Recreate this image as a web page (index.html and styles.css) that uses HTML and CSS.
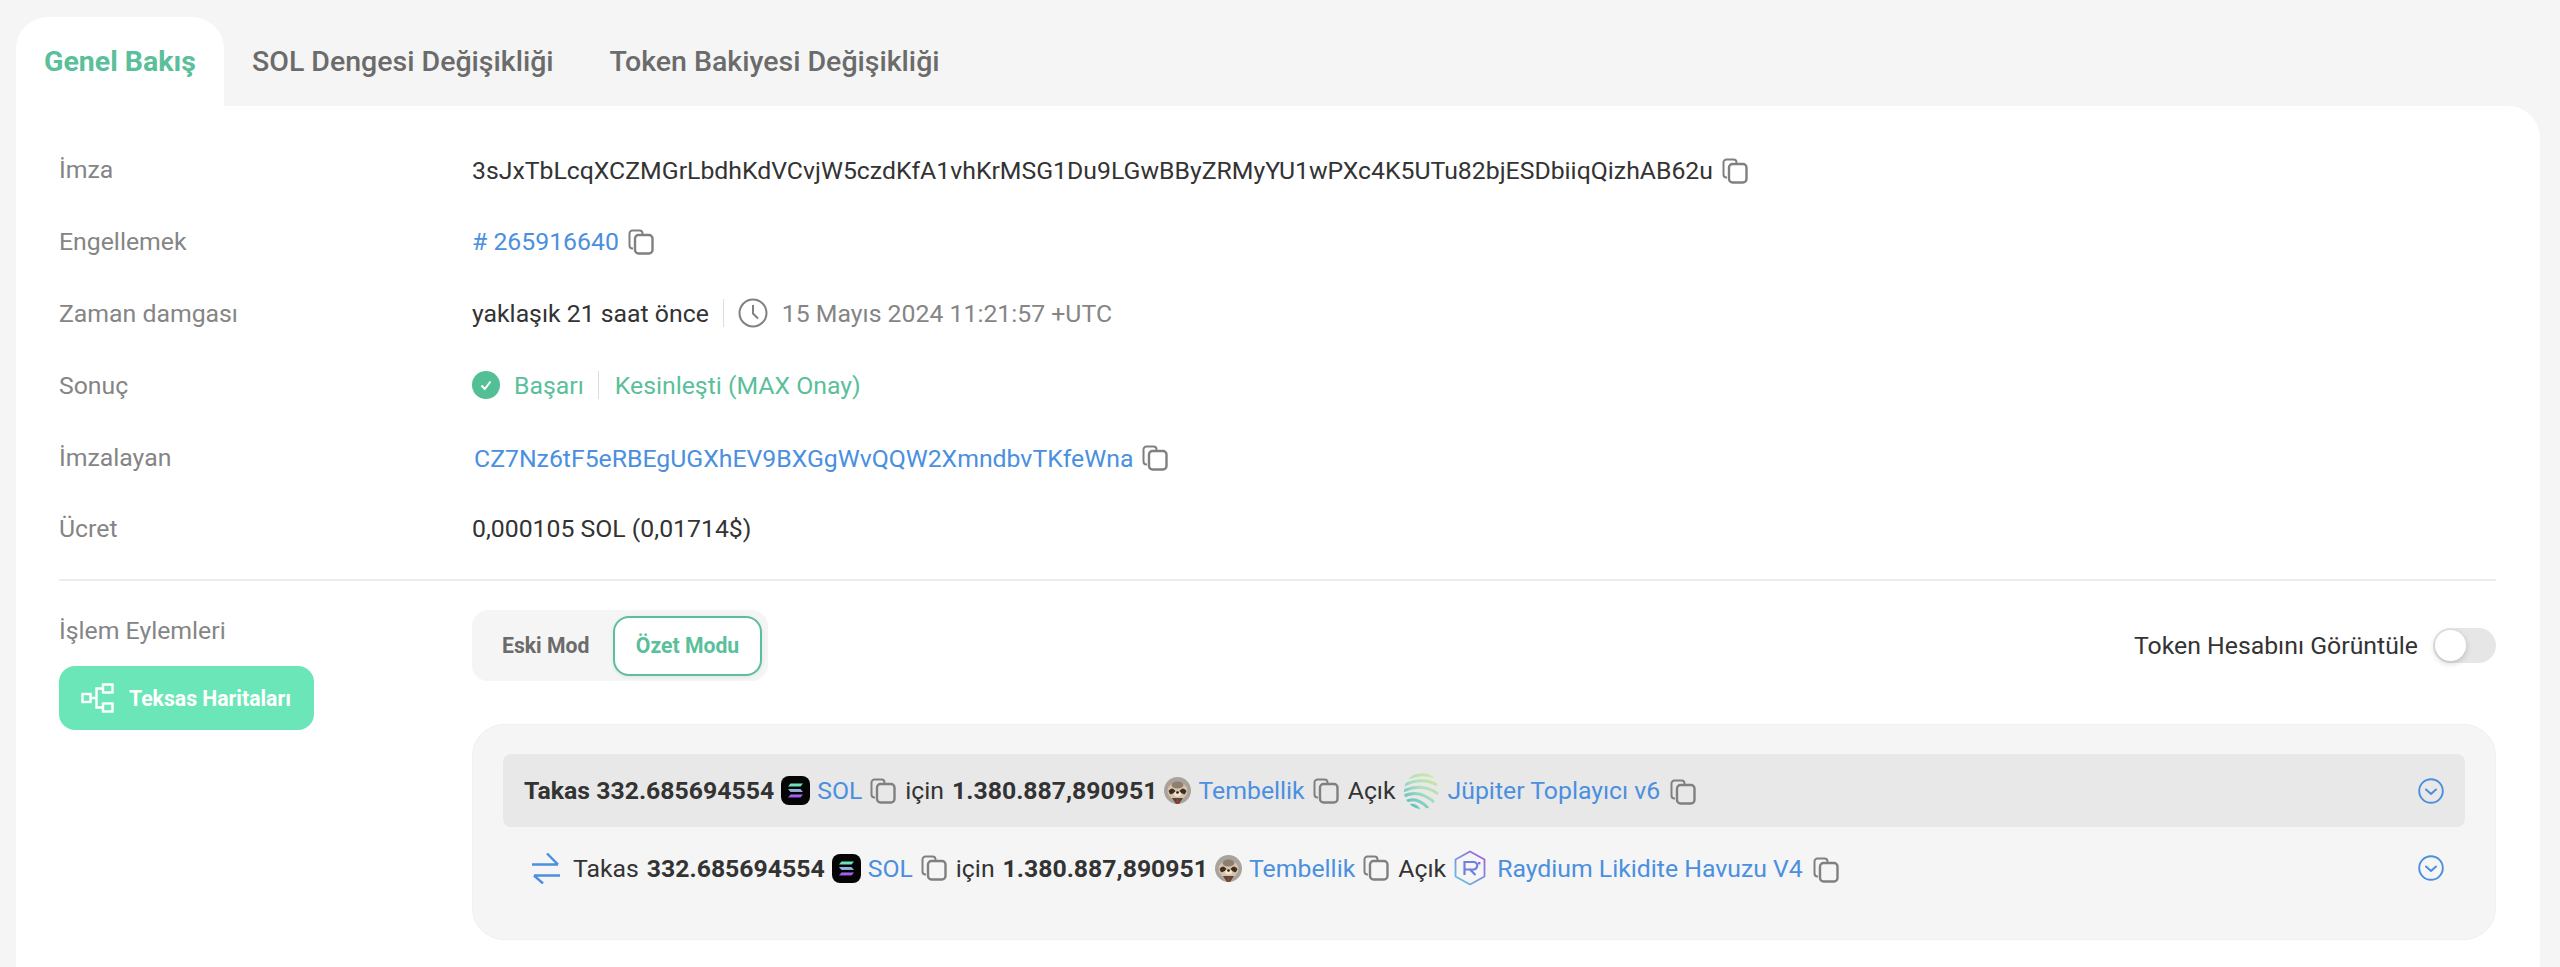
FILE: index.html
```html
<!DOCTYPE html>
<html lang="tr">
<head>
<meta charset="utf-8">
<title>Genel Bakış</title>
<link rel="stylesheet" href="styles.css">
</head>
<body>
<svg class="defs" width="0" height="0" aria-hidden="true">
  <defs>
    <symbol id="copy" viewBox="0 0 26 26">
      <path d="M5 19.5H4.5A3 3 0 0 1 1.5 16.500V4.500A3 3 0 0 1 4.500 1.500H11.500A3 3 0 0 1 14.500 4.500V5" fill="none" stroke="currentColor" stroke-width="2"/>
      <rect x="7" y="6" width="17.500" height="18.500" rx="3.500" fill="none" stroke="currentColor" stroke-width="2.400"/>
    </symbol>
    <symbol id="chev" viewBox="0 0 26 26">
      <circle cx="13" cy="13" r="11.800" fill="none" stroke="currentColor" stroke-width="1.900"/>
      <path d="M8 11.500L13 16L18 11.500" fill="none" stroke="currentColor" stroke-width="2" stroke-linecap="round" stroke-linejoin="round"/>
    </symbol>
    <linearGradient id="solg" x1="0" y1="0" x2="0" y2="1">
      <stop offset="0" stop-color="#5ff0b4"/><stop offset=".5" stop-color="#8fb0d8"/><stop offset="1" stop-color="#a04ff0"/>
    </linearGradient>
    <symbol id="sol" viewBox="0 0 29 29">
      <rect width="29" height="29" rx="8" fill="#050505"/>
      <path d="M9.500 7.500H22L19.500 10.500H7ZM7 13H19.500L22 16H9.500ZM9.500 18.500H22L19.500 21.500H7Z" fill="url(#solg)"/>
    </symbol>
    <symbol id="sloth" viewBox="0 0 27 27">
      <circle cx="13.500" cy="13.500" r="13.500" fill="#a8a39c"/>
      <ellipse cx="13.500" cy="14" rx="10" ry="9" fill="#d9c3a6"/>
      <ellipse cx="13.500" cy="8" rx="6" ry="3.500" fill="#8d7f70"/>
      <path d="M4.500 14Q8 9 11.500 14Q9 18 6 17ZM22.500 14Q19 9 15.500 14Q18 18 21 17Z" fill="#3b2f28"/>
      <ellipse cx="13.500" cy="17" rx="3.500" ry="2.500" fill="#f0e4d2"/>
      <circle cx="13.500" cy="15.500" r="1.300" fill="#1e1a18"/>
      <path d="M8 21H19L15 27H12Z" fill="#55493f"/>
      <rect x="12.500" y="22" width="2" height="5" fill="#b0382c"/>
    </symbol>
    <linearGradient id="jupg" gradientUnits="userSpaceOnUse" x1="32" y1="2" x2="6" y2="34">
      <stop offset="0" stop-color="#d5e89a"/><stop offset=".5" stop-color="#a9e0c0"/><stop offset="1" stop-color="#56bcc0"/>
    </linearGradient>
    <clipPath id="jupc"><circle cx="18" cy="18" r="18"/></clipPath>
    <symbol id="jup" viewBox="0 0 36 36">
      <g clip-path="url(#jupc)" fill="none" stroke="url(#jupg)" stroke-width="3">
        <path d="M-4 8Q18 -2 30 4"/>
        <path d="M-2 13Q18 3 33 12"/>
        <path d="M-2 18.500Q18 9 34 21"/>
        <path d="M-2 24Q14 15 30 29"/>
        <path d="M0 29.500Q12 22 24 35"/>
        <path d="M4 34Q10 29 16 38"/>
      </g>
    </symbol>
    <linearGradient id="rayg" gradientUnits="userSpaceOnUse" x1="30" y1="2" x2="2" y2="34">
      <stop offset="0" stop-color="#a05ae0"/><stop offset=".6" stop-color="#7a9be0"/><stop offset="1" stop-color="#62c8e0"/>
    </linearGradient>
    <symbol id="ray" viewBox="0 0 32 36">
      <path d="M16 1.500L30.500 9.500V26.500L16 34.500L1.500 26.500V9.500Z" fill="none" stroke="url(#rayg)" stroke-width="1.800" stroke-linejoin="round"/>
      <path d="M10.500 25V12H19.500A3.500 3.500 0 0 1 19.500 19.500H10.500M16 19.500L21.500 25" fill="none" stroke="#6f7fe0" stroke-width="2.200"/>
      <rect x="24" y="12" width="2.400" height="2.400" fill="#8f6fe0"/>
    </symbol>
  </defs>
</svg>

<nav class="tabs">
  <a class="tab tab-active">Genel Bakış</a>
  <a class="tab">SOL Dengesi Değişikliği</a>
  <a class="tab">Token Bakiyesi Değişikliği</a>
</nav>

<main class="panel">
  <section class="details">
    <div class="row">
      <div class="label">İmza</div>
      <div class="value value-low">3sJxTbLcqXCZMGrLbdhKdVCvjW5czdKfA1vhKrMSG1Du9LGwBByZRMyYU1wPXc4K5UTu82bjESDbiiqQizhAB62u <svg class="copy"><use href="#copy"/></svg></div>
    </div>
    <div class="row">
      <div class="label">Engellemek</div>
      <div class="value"><a class="link"># 265916640</a><svg class="copy"><use href="#copy"/></svg></div>
    </div>
    <div class="row">
      <div class="label">Zaman damgası</div>
      <div class="value">
        <span>yaklaşık 21 saat önce</span><span class="sep"></span>
        <svg class="clock" viewBox="0 0 30 30"><circle cx="15" cy="15" r="13.500" fill="none" stroke="currentColor" stroke-width="2"/><path d="M15 7V15.500L20 20.500" fill="none" stroke="currentColor" stroke-width="2"/></svg>
        <span class="muted">15 Mayıs 2024 11:21:57 +UTC</span>
      </div>
    </div>
    <div class="row">
      <div class="label">Sonuç</div>
      <div class="value success">
        <svg class="check" viewBox="0 0 28 28"><circle cx="14" cy="14" r="14" fill="#52bf95"/><path d="M9.500 14.500L12.800 18L18.500 10.500" fill="none" stroke="#fff" stroke-width="2"/></svg>
        <span>Başarı</span><span class="sep sep-light"></span><span>Kesinleşti (MAX Onay)</span>
      </div>
    </div>
    <div class="row">
      <div class="label">İmzalayan</div>
      <div class="value value-low"><a class="link signer">CZ7Nz6tF5eRBEgUGXhEV9BXGgWvQQW2XmndbvTKfeWna</a><svg class="copy"><use href="#copy"/></svg></div>
    </div>
    <div class="row">
      <div class="label">Ücret</div>
      <div class="value">0,000105 SOL (0,01714$)</div>
    </div>
  </section>

  <section class="actions">
    <div class="side">
      <div class="label">İşlem Eylemleri</div>
      <button class="maps">
        <svg class="maps-icon" viewBox="0 0 34 30"><g fill="none" stroke="#fff" stroke-width="2.400"><rect x="1.500" y="11" width="8" height="8"/><rect x="22" y="1.500" width="9.500" height="8"/><rect x="22" y="20.500" width="9.500" height="8"/><path d="M9.500 15H15.500M22 5.500H15.500V24.500H22"/></g></svg>
        Teksas Haritaları
      </button>
    </div>
    <div class="main">
      <div class="toolbar">
        <div class="modes">
          <span class="mode">Eski Mod</span>
          <span class="mode mode-active">Özet Modu</span>
        </div>
        <div class="toggle-wrap">
          <span>Token Hesabını Görüntüle</span>
          <span class="toggle"><span class="knob"></span></span>
        </div>
      </div>
      <div class="card">
        <div class="action action-first">
          <div class="line">
            <b>Takas 332.685694554</b><svg class="logo"><use href="#sol"/></svg><a class="link">SOL</a><svg class="copy"><use href="#copy"/></svg><span>için</span><b>1.380.887,890951</b><svg class="logo sloth"><use href="#sloth"/></svg><a class="link">Tembellik</a><svg class="copy"><use href="#copy"/></svg><span>Açık</span><svg class="logo jup"><use href="#jup"/></svg><a class="link">Jüpiter Toplayıcı v6</a><svg class="copy copy-far"><use href="#copy"/></svg>
          </div>
          <svg class="chev"><use href="#chev"/></svg>
        </div>
        <div class="action action-second">
          <div class="line">
            <svg class="swap" viewBox="0 0 28 31"><g fill="none" stroke="#4a8fe0" stroke-width="2.400"><path d="M0 11.500H26M15 0.500L26 11.500"/><path d="M28 22.500H2M2 22.500L11 30.500"/></g></svg>
            <span>Takas</span><b>332.685694554</b><svg class="logo"><use href="#sol"/></svg><a class="link">SOL</a><svg class="copy"><use href="#copy"/></svg><span>için</span><b>1.380.887,890951</b><svg class="logo sloth"><use href="#sloth"/></svg><a class="link">Tembellik</a><svg class="copy"><use href="#copy"/></svg><span>Açık</span><svg class="logo ray"><use href="#ray"/></svg><a class="link">Raydium Likidite Havuzu V4</a><svg class="copy copy-far"><use href="#copy"/></svg>
          </div>
          <svg class="chev"><use href="#chev"/></svg>
        </div>
      </div>
    </div>
  </section>
</main>
</body>
</html>
```
FILE: styles.css
```css
* { box-sizing: border-box; }
html, body { height: 100%; }
body {
  margin: 0;
  background: #f5f5f5;
  font-family: Roboto, "Liberation Sans", sans-serif;
  font-size: 24.800px;
  color: #333;
  display: flex;
  flex-direction: column;
  padding: 17px 20px 0 16px;
  overflow: hidden;
}
.defs { position: absolute; }

.tabs { display: flex; height: 89px; }
.tab {
  display: flex;
  align-items: center;
  padding: 0 28px;
  font-size: 28.500px;
  font-weight: 500;
  color: #6b6b6b;
  border-radius: 32px 32px 0 0;
}
.tab-active { background: #fff; color: #5abf9a; width: 208px; font-weight: 700; }

.panel {
  flex: 1;
  background: #fff;
  border-radius: 0 32px 0 0;
  padding: 28px 44px 0 43px;
}
.details { border-bottom: 2px solid #ececec; height: 447px; }
.row { display: flex; align-items: center; height: 71.800px; }
.label { width: 413px; color: #858585; flex: none; }
.value { display: flex; align-items: center; }
.value-low { padding-top: 2px; }
.link { color: #4a8fe0; }
.muted { color: #858585; }
.copy { width: 26px; height: 26px; color: #808080; flex: none; margin-left: 9px; }
.sep { width: 1px; height: 28px; background: #dedede; margin: 0 14px; }
.sep-light { margin-right: 16px; }
.clock { width: 30px; height: 30px; color: #808080; margin-right: 14px; }
.success { color: #5abf9a; }
.check { width: 28px; height: 28px; margin-right: 14px; }
.signer { margin-left: 2px; }

.actions { display: flex; }
.side { width: 413px; flex: none; padding-top: 35px; }
.maps {
  display: flex;
  align-items: center;
  width: 255px;
  height: 64px;
  margin-top: 21px;
  padding: 0 0 0 22px;
  border: 0;
  border-radius: 16px;
  background: #6ae6b8;
  color: #fff;
  font: 700 21.200px Roboto, sans-serif;
}
.maps-icon { width: 34px; height: 30px; margin-right: 14px; }

.main { flex: 1; padding-top: 29px; }
.toolbar { display: flex; justify-content: space-between; align-items: flex-start; }
.modes {
  display: flex;
  align-items: center;
  width: 296px;
  height: 71px;
  padding: 0 6px 0 30px;
  background: #f5f5f5;
  border-radius: 16px;
  font-size: 21.200px;
  font-weight: 700;
  color: #6b6b6b;
}
.mode { flex: none; }
.mode-active {
  display: flex;
  align-items: center;
  justify-content: center;
  width: 149px;
  height: 60px;
  margin-left: auto;
  background: #fff;
  border: 2px solid #5abf9a;
  border-radius: 16px;
  color: #5abf9a;
  box-shadow: 0 1px 4px rgba(0,0,0,.08);
}
.toggle-wrap { display: flex; align-items: center; gap: 15px; height: 71px; color: #333; }
.toggle { display: block; position: relative; width: 63px; height: 35px; border-radius: 18px; background: #e6e6e6; }
.knob {
  position: absolute; left: 2px; top: 2px;
  width: 31px; height: 31px; border-radius: 50%;
  background: #fff; box-shadow: 0 2px 6px rgba(0,0,0,.2);
}

.card {
  margin-top: 43px;
  height: 216px;
  padding: 29px 30px 0;
  background: #f5f5f5;
  border: 1px solid #f0f0f0;
  border-radius: 32px;
}
.action { display: flex; justify-content: space-between; align-items: center; height: 73px; }
.action-first { background: #e8e8e8; border-radius: 8px; padding: 0 21px 0 21px; }
.action-second { padding: 0 21px 0 29px; height: 82px; }
.line { display: flex; align-items: center; gap: 8px; }
.line b { font-weight: 700; }
.logo { width: 29px; height: 29px; flex: none; margin: 0 -1px; }
.sloth { width: 27px; height: 27px; }
.jup { width: 36px; height: 36px; margin: 0; }
.ray { width: 32px; height: 36px; margin: 0 3px 0 0; }
.line .copy { margin: 0 1px 0 0; }
.line .copy-far { margin: 3px 0 0 2px; }
.swap { width: 28px; height: 31px; margin-right: 5px; }
.chev { width: 26px; height: 26px; color: #4a8fe0; flex: none; }
```
